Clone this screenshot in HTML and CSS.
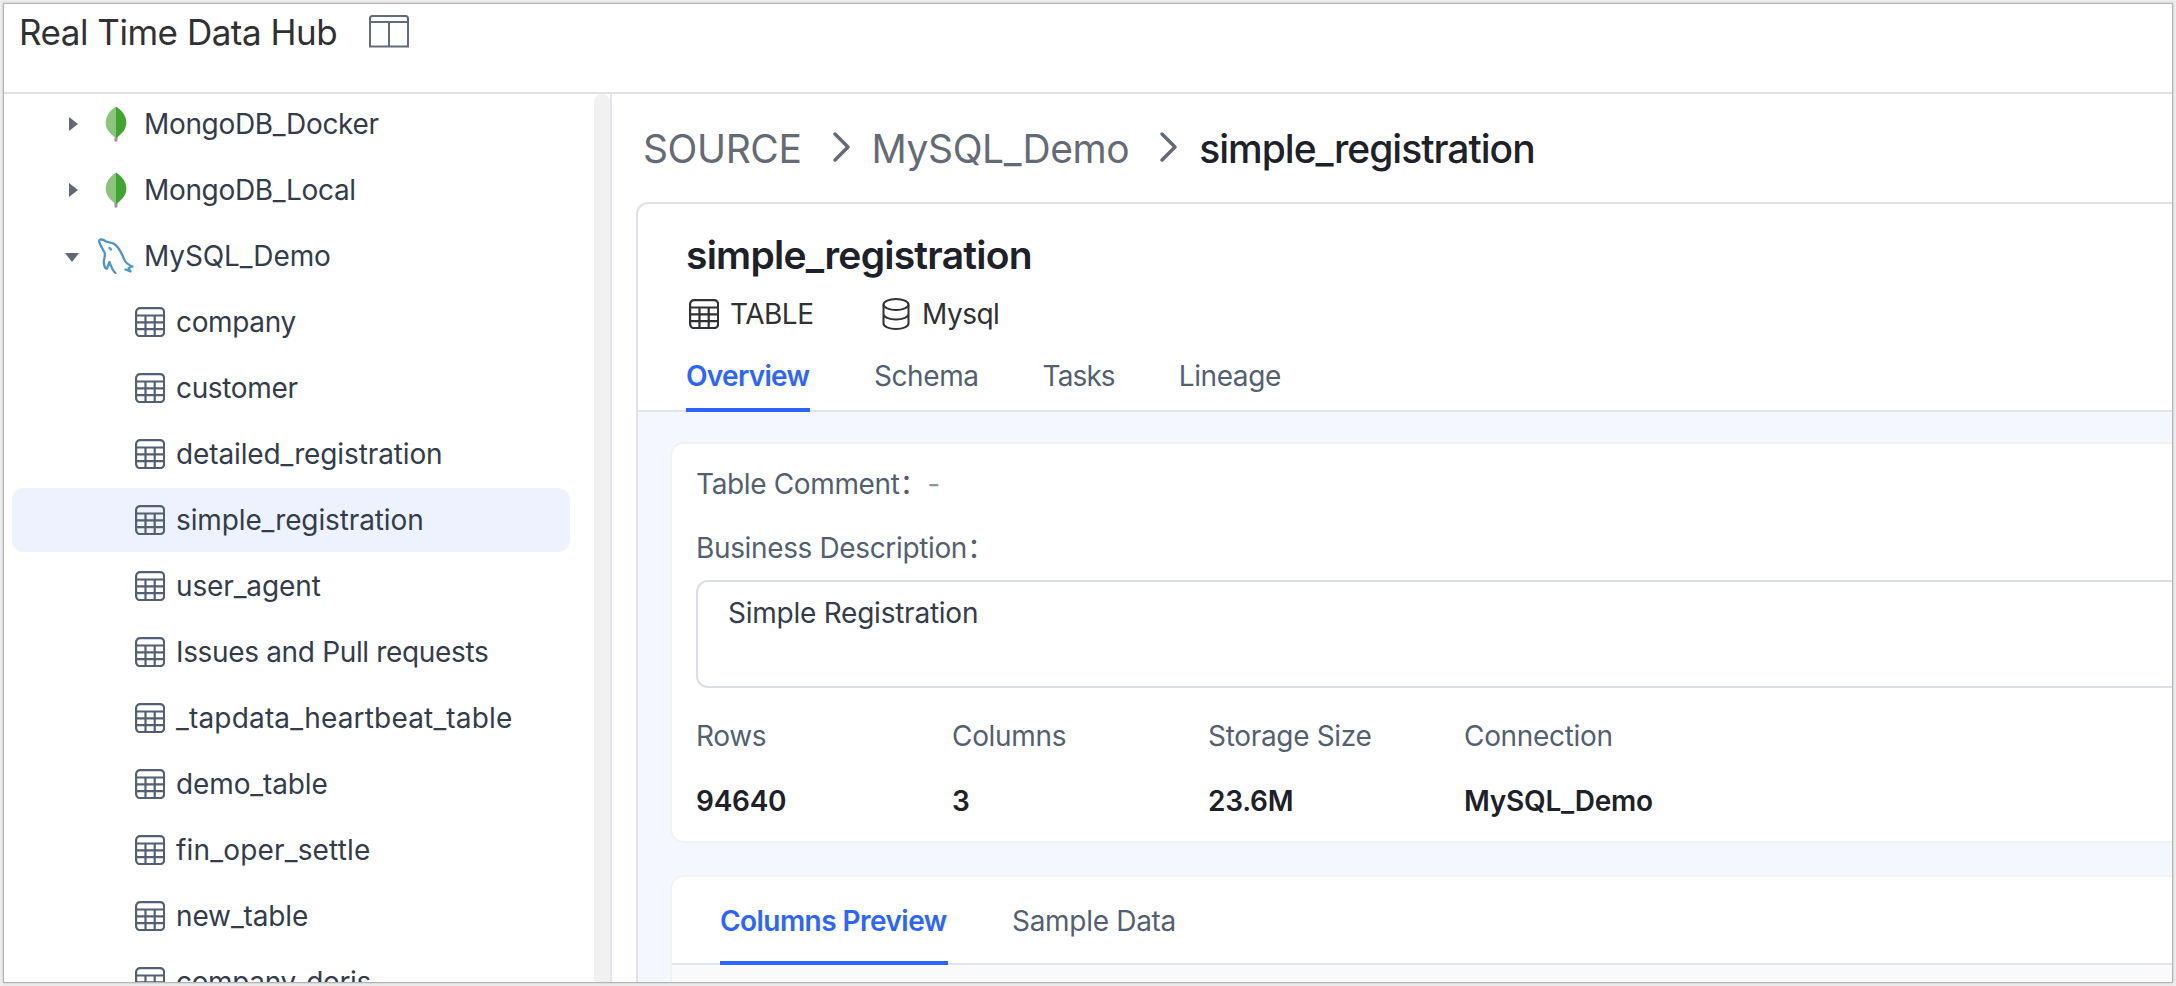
FILE: index.html
```html
<!DOCTYPE html>
<html lang="en">
<head>
<meta charset="utf-8">
<title>Real Time Data Hub</title>
<link rel="stylesheet" href="styles.css">
</head>
<body>
<svg class="defs" aria-hidden="true">
  <symbol id="i-table" viewBox="0 0 30 30">
    <g fill="none" stroke="currentColor" stroke-width="2.2"><rect x="1.100" y="1.100" width="28" height="28" rx="4"/><path d="M1 8.500H29M1 15.300H29M1 22.200H29M10.500 8.500V29M19.700 8.500V29"/></g>
  </symbol>
  <symbol id="i-leaf" viewBox="0 0 22 36">
    <path d="M9.500 30h3v5.500h-3z" fill="#8f9d88"/>
    <path d="M11 .5C4.500 5 .7 10 .7 17c0 6 4.300 11 10.300 15z" fill="#8bc37f"/>
    <path d="M11 .5C17.500 5 21.300 10 21.300 17c0 6-4.300 11-10.300 15z" fill="#3fa52e"/>
  </symbol>
</svg>
<div class="window">
  <header class="topbar">
    <h1 class="app-title">Real Time Data Hub</h1>
    <svg class="layout-icon" viewBox="0 0 40 33"><g fill="none" stroke="#646a78" stroke-width="2"><path d="M1 31.500V3.500Q1 1 3.500 1H36.500Q39 1 39 3.500V31.500ZM1 7H39M20 7V32"/></g></svg>
  </header>
  <div class="body">
    <aside class="sidebar">
      <ul class="tree">
        <li class="node"><svg class="caret" viewBox="0 0 14 14"><path d="M4 0 13 7 4 14z"/></svg><svg class="leaf"><use href="#i-leaf"/></svg><span class="tight">MongoDB_Docker</span></li>
        <li class="node"><svg class="caret" viewBox="0 0 14 14"><path d="M4 0 13 7 4 14z"/></svg><svg class="leaf"><use href="#i-leaf"/></svg><span class="tight">MongoDB_Local</span></li>
        <li class="node"><svg class="caret" viewBox="0 0 14 14"><path d="M0 4H14L7 13z"/></svg><svg class="dolphin" viewBox="0 0 36 36"><path d="M6.500 14.500C5 11 1 6 1.200 2.800 1.300.800 5 1.200 7.500 3.200 9 4.600 13 4 16 5.800 21 9 24 16 26 21 27 24 29.500 26.500 34.500 28.500L30.500 30 32.500 33.500 27.500 31.500M6.500 14.500C8 19 5 21 6 26 6.500 29 7.500 31 9 30.500L11.500 24C13 28 14 32 17.500 35M11.500 10 13 11.500"/></svg><span>MySQL_Demo</span></li>
        <li class="leaf-node"><svg class="ti"><use href="#i-table"/></svg><span class="tight">company</span></li>
        <li class="leaf-node"><svg class="ti"><use href="#i-table"/></svg><span class="tight">customer</span></li>
        <li class="leaf-node"><svg class="ti"><use href="#i-table"/></svg><span>detailed_registration</span></li>
        <li class="leaf-node selected"><svg class="ti"><use href="#i-table"/></svg><span>simple_registration</span></li>
        <li class="leaf-node"><svg class="ti"><use href="#i-table"/></svg><span>user_agent</span></li>
        <li class="leaf-node"><svg class="ti"><use href="#i-table"/></svg><span class="tight">Issues and Pull requests</span></li>
        <li class="leaf-node"><svg class="ti"><use href="#i-table"/></svg><span class="loose">_tapdata_heartbeat_table</span></li>
        <li class="leaf-node"><svg class="ti"><use href="#i-table"/></svg><span>demo_table</span></li>
        <li class="leaf-node"><svg class="ti"><use href="#i-table"/></svg><span class="loose">fin_oper_settle</span></li>
        <li class="leaf-node"><svg class="ti"><use href="#i-table"/></svg><span>new_table</span></li>
        <li class="leaf-node"><svg class="ti"><use href="#i-table"/></svg><span class="tight">company_doris</span></li>
      </ul>
      <div class="scrollbar"></div>
    </aside>
    <main class="main">
      <nav class="crumbs">
        <span class="c1">SOURCE</span>
        <svg class="chev" viewBox="0 0 20 32"><path d="M3 3 16 16 3 29"/></svg>
        <span class="c2">MySQL_Demo</span>
        <svg class="chev" viewBox="0 0 20 32"><path d="M3 3 16 16 3 29"/></svg>
        <span class="current">simple_registration</span>
      </nav>
      <section class="detail">
        <h2 class="name">simple_registration</h2>
        <div class="meta">
          <svg class="mi"><use href="#i-table"/></svg><span class="kind">TABLE</span>
          <svg class="db" viewBox="0 0 28 32"><g fill="none" stroke="currentColor" stroke-width="2"><ellipse cx="14" cy="6.500" rx="12.500" ry="5.500"/><path d="M1.500 6.500V25.500C1.500 28.500 7 31 14 31S26.500 28.500 26.500 25.500V6.500M1.500 16C1.500 19 7 21.500 14 21.500S26.500 19 26.500 16"/></g></svg><span class="engine">Mysql</span>
        </div>
        <div class="tabs">
          <span class="tab active">Overview</span><span class="tab">Schema</span><span class="tab narrow">Tasks</span><span class="tab">Lineage</span>
        </div>
        <div class="panel">
          <div class="card">
            <p class="line"><span class="label">Table Comment：</span><span class="dash">-</span></p>
            <p class="line second"><span class="label">Business Description：</span></p>
            <div class="textarea"><span>Simple Registration</span></div>
            <dl class="stats">
              <div><dt>Rows</dt><dd>94640</dd></div>
              <div><dt>Columns</dt><dd>3</dd></div>
              <div><dt>Storage Size</dt><dd>23.6M</dd></div>
              <div><dt>Connection</dt><dd>MySQL_Demo</dd></div>
            </dl>
          </div>
          <div class="card preview">
            <div class="tabs">
              <span class="tab active">Columns Preview</span><span class="tab">Sample Data</span>
            </div>
            <div class="table-head"></div>
          </div>
        </div>
      </section>
    </main>
  </div>
</div>
</body>
</html>
```
FILE: styles.css
```css
* { box-sizing: border-box; }

body {
  margin: 0;
  width: 2176px;
  height: 986px;
  overflow: hidden;
  padding: 4px;
  background: #f1f1f1;
  font-family: Inter, "Noto Sans CJK SC", sans-serif;
  font-size: 28px;
  color: #333c4c;
}

h1, h2, p, ul, dl, dt, dd { margin: 0; padding: 0; font-weight: 400; }
ul { list-style: none; }
svg { flex: none; display: block; }
span { white-space: nowrap; }
.defs { position: absolute; width: 0; height: 0; }

.window {
  display: flex;
  flex-direction: column;
  height: 978px;
  background: #fff;
  overflow: hidden;
  box-shadow: 0 0 0 1px #b4b4b4, 0 0 3px 1px #bbb;
}

.topbar {
  display: flex;
  align-items: flex-start;
  flex: none;
  height: 90px;
  padding: 6px 0 0 15px;
  border-bottom: 2px solid #dfe1e6;
}
.app-title { width: 350px; font-size: 35px; line-height: 44px; letter-spacing: -.48px; color: #303133; }
.layout-icon { width: 40px; height: 33px; margin-top: 5px; }

.body { display: flex; flex: 1; min-height: 0; }

.sidebar {
  display: flex;
  flex: none;
  width: 608px;
  border-right: 2px solid #e3e4ea;
  overflow: hidden;
}
.tree { width: 566px; margin-right: 24px; padding-left: 8px; letter-spacing: -.12px; }
.scrollbar { width: 16px; border-radius: 8px 8px 0 0; background: #f1f1f1; }
.node, .leaf-node {
  display: flex;
  align-items: center;
  height: 64px;
  margin-bottom: 2px;
  border-radius: 12px;
}
.tree li:first-child { margin-top: -2px; }
.node { padding-left: 53px; }
.leaf-node { padding-left: 123px; }
.selected { background: #eef2ff; }
.tight { letter-spacing: -.34px; }
.loose { letter-spacing: .18px; }
.caret { width: 14px; height: 14px; fill: #636976; }
.leaf { width: 22px; height: 36px; margin: 0 17px 0 26px; }
.dolphin {
  width: 36px; height: 36px; margin: 0 10px 0 19px;
  fill: none; stroke: #4d96cb; stroke-width: 2.3; stroke-linejoin: round; stroke-linecap: round;
}
.ti { width: 30px; height: 30px; margin-right: 11px; color: #535f73; }

.main { flex: 1; min-width: 0; padding-left: 24px; display: flex; flex-direction: column; }

.crumbs {
  display: flex;
  align-items: center;
  flex: none;
  height: 108px;
  padding: 1px 0 0 7px;
  font-size: 39px;
  letter-spacing: -.4px;
  color: #646a76;
}
.chev { width: 20px; height: 32px; fill: none; stroke: #646a76; stroke-width: 3.5; stroke-linecap: round; stroke-linejoin: round; margin: -3px 20px 0 30px; }
.current { color: #1d2129; font-weight: 500; letter-spacing: -1px; }

.detail {
  flex: 1;
  display: flex;
  flex-direction: column;
  border: solid #dfe1e6;
  border-width: 2px 0 0 2px;
  border-radius: 12px 0 0 0;
  overflow: hidden;
}
.name { font-size: 39px; line-height: 48px; font-weight: 600; letter-spacing: -.78px; color: #1d2129; padding: 27px 0 0 48px; }
.meta { display: flex; align-items: center; height: 36px; margin-top: 17px; padding-left: 51px; color: #303133; letter-spacing: -.5px; }
.mi { width: 30px; height: 30px; margin-right: 11px; }
.kind { width: 152px; }
.db { width: 28px; height: 32px; margin-right: 12px; }

.tabs { display: flex; gap: 64px; border-bottom: 2px solid #e1e4e9; padding-left: 48px; color: #535f72; letter-spacing: -.42px; }
.tab { height: 78px; line-height: 88px; }
.active { width: 124px; color: #2c65ff; font-weight: 600; letter-spacing: -.7px; border-bottom: 4px solid #2c65ff; margin-bottom: -2px; height: 80px; }
.narrow { letter-spacing: -.9px; }

.panel { flex: 1; background: #f4f8fe; padding: 30px 0 0 32px; min-height: 0; }
.card { height: 401px; border: solid #f2f2f2; border-width: 2px 0 2px 2px; border-radius: 14px 0 0 14px; background: #fff; padding: 20px 0 0 24px; }
.line { display: flex; height: 40px; line-height: 40px; color: #535f72; letter-spacing: -.36px; }
.second { margin-top: 24px; }
.dash { color: #8f959e; }
.textarea { height: 108px; margin-top: 12px; border: solid #dcdee5; border-width: 2px 0 2px 2px; border-radius: 12px 0 0 12px; padding: 11px 0 0 30px; line-height: 40px; letter-spacing: -.24px; color: #333c4c; }
.stats { display: flex; margin-top: 28px; }
.stats div { width: 256px; }
.stats dt { line-height: 40px; color: #535f72; letter-spacing: -.32px; }
.stats dd { line-height: 40px; margin-top: 25px; color: #1d2129; font-weight: 600; letter-spacing: -.25px; }

.preview { height: 200px; margin-top: 32px; padding: 0; border-radius: 14px 0 0 0; }
.preview .tabs { letter-spacing: -.3px; }
.preview .tab { height: 86px; line-height: 88px; }
.preview .active { width: 228px; height: 88px; letter-spacing: -.55px; }
.table-head { height: 60px; background: #fafafa; }
```
